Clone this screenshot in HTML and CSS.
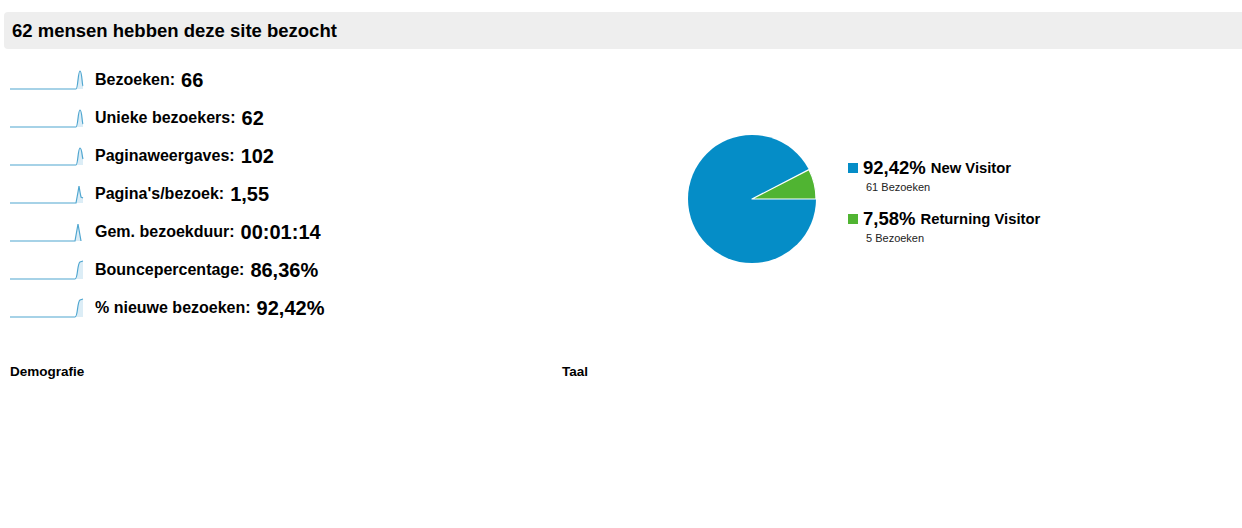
FILE: index.html
```html
<!DOCTYPE html>
<html lang="nl">
<head>
<meta charset="utf-8">
<title>Bezoekers</title>
<link rel="stylesheet" href="styles.css">
</head>
<body>
<div class="header">62 mensen hebben deze site bezocht</div>
<div class="overview">
  <ul class="metrics">
    <li class="metric">
      <svg class="spark" viewBox="0 0 76 22" width="76" height="22"><path class="fill" d="M68 20 C70 20 70 2 72 2 C74 2 74 16 75 17 V20 Z"/><path class="line" d="M2 20 H68 C70 20 70 2 72 2 C74 2 74 16 75 17"/></svg>
      <span class="label">Bezoeken:</span><span class="value">66</span>
    </li>
    <li class="metric">
      <svg class="spark" viewBox="0 0 76 22" width="76" height="22"><path class="fill" d="M68 20 C70 20 70 3 72 3 C74 3 74 16 75 17 V20 Z"/><path class="line" d="M2 20 H68 C70 20 70 3 72 3 C74 3 74 16 75 17"/></svg>
      <span class="label">Unieke bezoekers:</span><span class="value">62</span>
    </li>
    <li class="metric">
      <svg class="spark" viewBox="0 0 76 22" width="76" height="22"><path class="fill" d="M68 20 C70 20 70 3 72 3 C74 3 74 12 75 14 V20 Z"/><path class="line" d="M2 20 H68 C70 20 70 3 72 3 C74 3 74 12 75 14"/></svg>
      <span class="label">Paginaweergaves:</span><span class="value">102</span>
    </li>
    <li class="metric">
      <svg class="spark" viewBox="0 0 76 22" width="76" height="22"><path class="fill" d="M68 20 L70 9 L71 3 L72 9 L73 14 L75 15 V20 Z"/><path class="line" d="M2 20 H68 L70 9 L71 3 L72 9 L73 14 L75 15"/></svg>
      <span class="label">Pagina's/bezoek:</span><span class="value">1,55</span>
    </li>
    <li class="metric">
      <svg class="spark" viewBox="0 0 76 22" width="76" height="22"><path class="fill" d="M67 20 L70 3 L73 20 Z"/><path class="line" d="M2 20 H67 L70 3 L73 20"/></svg>
      <span class="label">Gem. bezoekduur:</span><span class="value">00:01:14</span>
    </li>
    <li class="metric">
      <svg class="spark" viewBox="0 0 76 22" width="76" height="22"><path class="fill" d="M67 20 C70 20 69 5 72 3 L75 2 V20 Z"/><path class="line" d="M2 20 H67 C70 20 69 5 72 3 L75 2"/></svg>
      <span class="label">Bouncepercentage:</span><span class="value">86,36%</span>
    </li>
    <li class="metric">
      <svg class="spark" viewBox="0 0 76 22" width="76" height="22"><path class="fill" d="M67 20 C70 20 69 5 72 3 L75 2 V20 Z"/><path class="line" d="M2 20 H67 C70 20 69 5 72 3 L75 2"/></svg>
      <span class="label">% nieuwe bezoeken:</span><span class="value">92,42%</span>
    </li>
  </ul>
  <div class="chart">
    <svg class="pie" viewBox="0 0 130 130" width="130" height="130">
      <circle cx="65" cy="65" r="64" fill="#058dc7"/>
      <path d="M65 65 L129 65 A64 64 0 0 0 121.9 35.6 Z" fill="#50b432" stroke="#ffffff" stroke-width="1.2" stroke-linejoin="round"/>
    </svg>
    <ul class="legend">
      <li class="entry">
        <div class="entry-main"><span class="swatch blue"></span><span class="pct">92,42%</span><span class="name">New Visitor</span></div>
        <div class="count">61 Bezoeken</div>
      </li>
      <li class="entry">
        <div class="entry-main"><span class="swatch green"></span><span class="pct">7,58%</span><span class="name">Returning Visitor</span></div>
        <div class="count">5 Bezoeken</div>
      </li>
    </ul>
  </div>
</div>
<div class="sections">
  <div class="section-title">Demografie</div>
  <div class="section-title">Taal</div>
</div>
</body>
</html>
```

FILE: styles.css
```css
html, body {
  margin: 0;
  padding: 0;
  background: #ffffff;
}
body {
  font-family: "Liberation Sans", Arial, sans-serif;
  color: #000000;
}
.header {
  margin: 12px 0 0 4px;
  height: 37px;
  line-height: 38px;
  padding-left: 8px;
  background: #eeeeee;
  border-radius: 4px 0 0 4px;
  font-size: 18.5px;
  font-weight: bold;
}
.overview {
  display: flex;
  margin-top: 12px;
}
.metrics {
  list-style: none;
  margin: 0;
  padding: 0 0 0 8px;
  width: 679px;
}
.metric {
  display: flex;
  align-items: center;
  height: 38px;
}
.spark {
  display: block;
  margin-right: 11px;
}
.spark .line {
  fill: none;
  stroke: #4fa6d0;
  stroke-width: 1.2;
}
.spark .fill {
  fill: #dcedf6;
  stroke: none;
}
.label {
  font-size: 16px;
  font-weight: bold;
  margin-right: 6px;
}
.value {
  font-size: 20px;
  font-weight: bold;
}
.chart {
  display: flex;
  align-items: center;
  padding-top: 73px;
  align-self: flex-start;
}
.pie {
  display: block;
  margin-right: 31px;
}
.legend {
  list-style: none;
  margin: 2px 0 0 0;
  padding: 0;
  display: flex;
  flex-direction: column;
  gap: 15px;
}
.entry-main {
  display: flex;
  align-items: center;
}
.swatch {
  width: 10px;
  height: 10px;
  margin-right: 5px;
}
.swatch.blue { background: #058dc7; }
.swatch.green { background: #50b432; }
.pct {
  font-size: 18.5px;
  font-weight: bold;
  margin-right: 5px;
}
.name {
  font-size: 14.8px;
  font-weight: bold;
}
.count {
  font-size: 11px;
  margin: 2px 0 0 18px;
  color: #222222;
}
.sections {
  display: grid;
  grid-template-columns: 552px 1fr;
  padding-left: 10px;
  margin-top: 37px;
}
.section-title {
  font-size: 13.5px;
  font-weight: bold;
}
```
